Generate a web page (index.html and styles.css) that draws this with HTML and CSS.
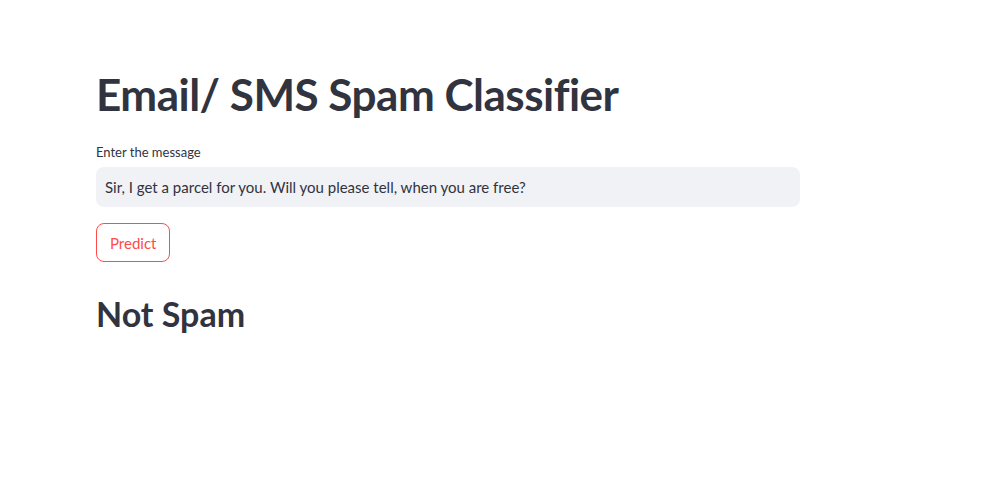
FILE: index.html
```html
<!DOCTYPE html>
<html>
<head>
<meta charset="utf-8">
<link rel="stylesheet" href="styles.css">
</head>
<body>
<main class="block">
  <h1 class="title">Email/ SMS Spam Classifier</h1>
  <label class="label">Enter the message</label>
  <div class="input">Sir, I get a parcel for you. Will you please tell, when you are free?</div>
  <button class="btn">Predict</button>
  <h2 class="result">Not Spam</h2>
</main>
</body>
</html>
```
FILE: styles.css
```css
html, body {
  margin: 0;
  padding: 0;
  background: #ffffff;
}
body {
  font-family: Lato, "Open Sans", sans-serif;
  color: rgb(49, 51, 63);
}
.block {
  width: 704px;
  margin-left: 96px;
  padding-top: 64px;
  display: flex;
  flex-direction: column;
  align-items: flex-start;
}
.title {
  margin: 0;
  font-size: 44px;
  font-weight: 700;
  line-height: 60px;
  letter-spacing: -0.5px;
}
.label {
  margin-top: 20px;
  font-size: 13px;
  line-height: 16px;
}
.input {
  margin-top: 7px;
  box-sizing: border-box;
  width: 704px;
  height: 40px;
  background: #f0f2f6;
  border-radius: 8px;
  padding: 0 9px;
  display: flex;
  align-items: center;
  font-size: 15px;
}
.btn {
  margin-top: 16px;
  height: 39px;
  padding: 0 13px;
  border: 1px solid rgb(255, 75, 75);
  border-radius: 8px;
  background: #fff;
  color: rgb(255, 75, 75);
  font-family: inherit;
  font-size: 15px;
}
.result {
  margin: 30px 0 0;
  font-size: 34px;
  font-weight: 700;
  line-height: 44px;
}
```
